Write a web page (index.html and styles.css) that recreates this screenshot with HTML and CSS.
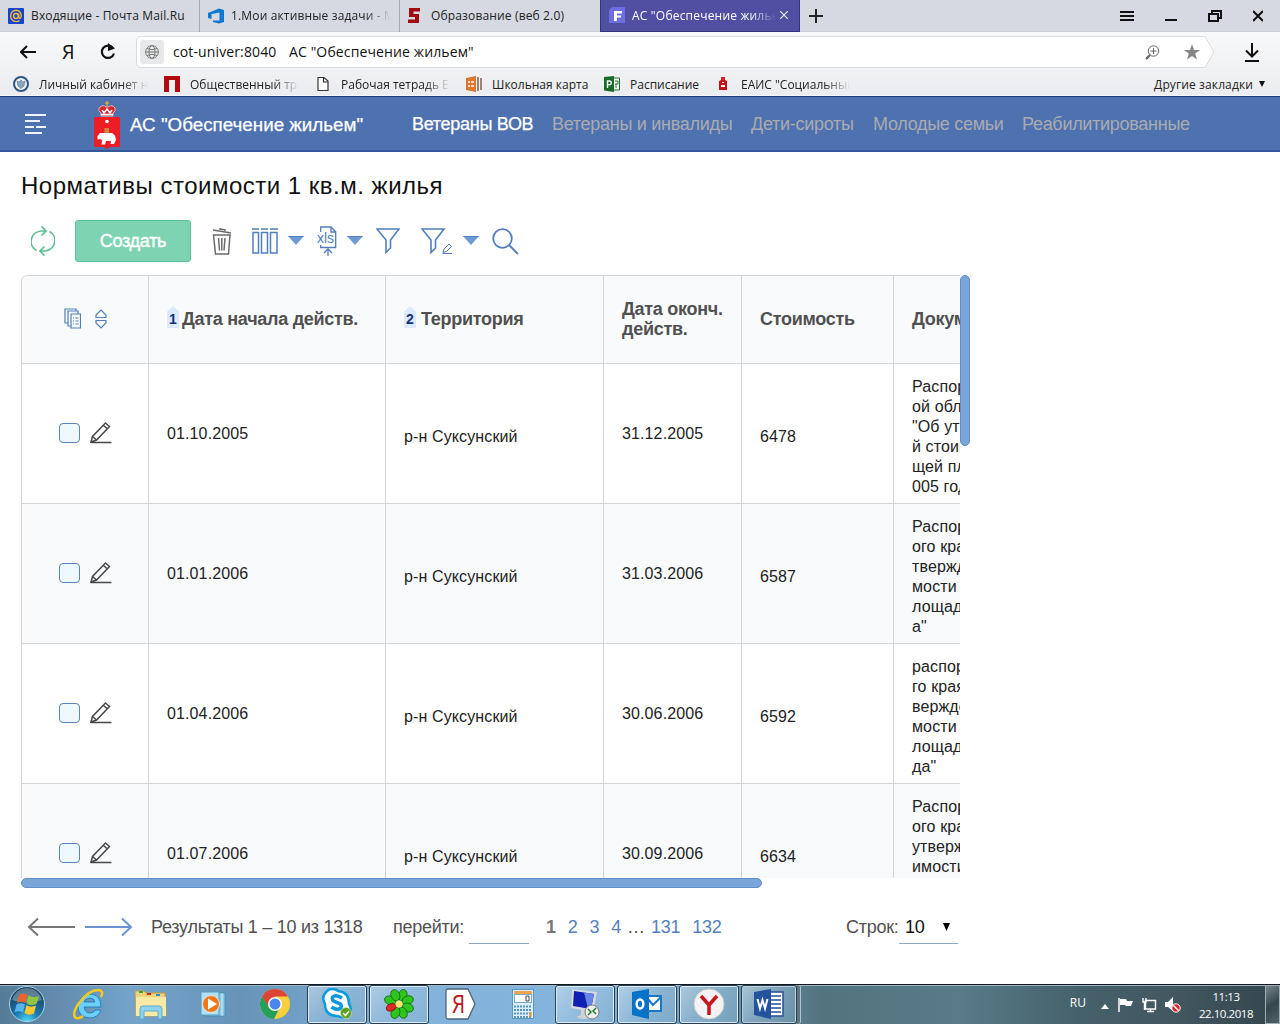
FILE: index.html
```html
<!DOCTYPE html>
<html lang="ru">
<head>
<meta charset="utf-8">
<title>АС "Обеспечение жильем"</title>
<link rel="stylesheet" href="styles.css">
</head>
<body>
<svg class="defs" width="0" height="0">
  <symbol id="pencil" viewBox="0 0 24 24"><path d="M2 21.500H22.500M2 21L3.500 15.500 16.500 2 20.500 5.500 7.500 19ZM3.500 15.500 7.500 19M14.500 4.500 18.500 8" fill="none" stroke="#484848" stroke-width="1.500"/></symbol>
  <symbol id="caret" viewBox="0 0 16 10"><path d="M0 0H16L8 9Z" fill="#6b9bd4"/><path d="M.5 .5H15.500" stroke="#4f80bb"/></symbol>
</svg>

<div class="tabs">
  <div class="tab"><svg width="16" height="16"><rect width="16" height="16" rx="1" fill="#1244d0"/><path d="M10.800 5.500V9.300Q11 11 12.600 10 13.600 8.600 13 6 11.500 2.300 8 2.300 3 2.500 2.600 8 3 13.300 8 13.600 10 13.600 11.500 12.600" fill="none" stroke="#f5b733" stroke-width="1.400"/><circle cx="8" cy="8" r="2.400" fill="none" stroke="#f5b733" stroke-width="1.500"/></svg><span class="t1">Входящие - Почта Mail.Ru</span></div>
  <div class="tab"><svg width="16" height="16"><path d="M5 3 11 .5 16 2V14L11 15.500 5 14V12.500L11.500 12.500V4.500L3.500 6V11L0 10V5Z" fill="#0d78d0"/></svg><span class="t2 fade">1.Мои активные задачи - М</span></div>
  <div class="tab last"><svg width="16" height="16"><path d="M1 0H12V3.500H5.500V6H11V15H0V11.500H7V9H1Z" fill="#a00c10"/></svg><span class="t3">Образование (веб 2.0)</span></div>
  <div class="tab active"><svg width="16" height="16"><path d="M3 0H16V16H0V3Z" fill="#6d6ee0"/><path d="M5 4H13V6.500H8V8.500H12V10.500H8V14H5Z" fill="#fff"/></svg><span class="t4 fade">АС "Обеспечение жильем"</span><svg class="close" width="8" height="8"><path d="M0 0 8 8M8 0 0 8" stroke="#e8e8ff" stroke-width="1.200"/></svg></div>
  <svg class="plus" width="14" height="14"><path d="M7 0V14M0 7H14" stroke="#222" stroke-width="2"/></svg>
  <div class="window-buttons">
    <svg width="14" height="14"><path d="M0 3H14M0 7H14M0 11H14" stroke="#111" stroke-width="2"/></svg>
    <svg width="12" height="14"><path d="M0 11H12" stroke="#111" stroke-width="2"/></svg>
    <svg width="14" height="14"><path d="M4 4V2H13V9H10M1 5H10V12H1Z" fill="none" stroke="#111" stroke-width="2"/></svg>
    <svg width="10" height="14"><path d="M0 2 10 12M10 2 0 12" stroke="#111" stroke-width="2"/></svg>
  </div>
</div>

<div class="browser-bar">
  <div class="address-row">
    <svg width="16" height="14"><path d="M16 7H1M7 1 1 7 7 13" fill="none" stroke="#111" stroke-width="2"/></svg>
    <span class="ya">Я</span>
    <svg width="16" height="18"><path d="M13 5A6.200 6.200 0 1 0 14 10.500" fill="none" stroke="#111" stroke-width="2.200"/><path d="M8 0 15 5.500 8 8Z" fill="#111"/></svg>
    <div class="address">
      <svg class="outline" width="1079" height="33"><path d="M5.500 .5H1069L1078 16 1069 31.500H5.500Q.5 31.500 .5 26.500V5.500Q.5 .5 5.500 .5Z" fill="#fff" stroke="#dcdddf"/></svg>
      <div class="site"><svg width="14" height="14" fill="none" stroke="#777"><circle cx="7" cy="7" r="6.400"/><ellipse cx="7" cy="7" rx="3" ry="6.400"/><path d="M.6 7H13.400M2 3.500Q7 6 12 3.500M2 10.500Q7 8 12 10.500"/></svg></div>
      <span class="url">cot-univer:8040</span><span class="page-name">АС "Обеспечение жильем"</span>
      <svg class="magnify" width="15" height="15" fill="none" stroke="#666"><circle cx="8.500" cy="6" r="5.200"/><path d="M8.500 3V9M5.500 6H11.500"/><path d="M5 10 1 14" stroke-width="2.400"/></svg>
      <svg class="star" width="16" height="16"><path d="M8 0 10 6H16L11.200 9.500 13 15.500 8 12 3 15.500 4.800 9.500 0 6H6Z" fill="#858585"/></svg>
    </div>
    <svg class="download" width="14" height="19"><path d="M7 0V13M1 7.500 7 13.500 13 7.500M0 18H14" fill="none" stroke="#111" stroke-width="2"/></svg>
  </div>
  <div class="bookmarks">
    <div class="bm"><svg width="16" height="16"><circle cx="8" cy="8" r="7" fill="#f2f2f2" stroke="#2d5687" stroke-width="2"/><path d="M4 5 6 6 8 4 10 6 12 5 11 10 8 12.500 5 10Z" fill="#8ba3ba" stroke="#5d7896" stroke-width=".6"/></svg><span class="fade">Личный кабинет на</span></div>
    <div class="bm"><svg width="16" height="16"><path d="M0 0H16V16H11V4H5V16H0Z" fill="#b10a10"/></svg><span class="fade">Общественный тран</span></div>
    <div class="bm"><svg width="16" height="16"><path d="M3 1.500H9L13 5V14.500H3ZM8.500 2V6H13" fill="#fff" stroke="#333" stroke-width="1.200"/></svg><span class="fade">Рабочая тетрадь ЕГ</span></div>
    <div class="bm"><svg width="16" height="16"><path d="M0 2 10 0V16L0 14Z" fill="#dd762f"/><path d="M2 6H4M5 6H8M2 10H4M5 10H8" stroke="#fff" stroke-width="1.500"/><path d="M12 1V15M15 2V14" stroke="#806050" stroke-width="1.500"/></svg><span class="w4">Школьная карта</span></div>
    <div class="bm"><svg width="16" height="16"><path d="M9 2H15.500V14H9" fill="#fff" stroke="#217332"/><path d="M11 5H14V8H11M12 8V12" fill="none" stroke="#217332"/><path d="M0 1 10 0V16L0 14.500Z" fill="#176c29"/><path d="M3.500 12V5H5.500Q8 5.200 7 8 6 9 3.500 8.700" fill="none" stroke="#fff" stroke-width="1.400"/></svg><span class="w5">Расписание</span></div>
    <div class="bm"><svg width="16" height="16"><path d="M4 5Q8 2.500 12 5V14H4Z" fill="#c41317"/><path d="M6 1H10V4H6Z" fill="#d22"/><path d="M6 9H10V11H6ZM7 6H9V7H7Z" fill="#fff"/></svg><span class="fade">ЕАИС "Социальный</span></div>
    <div class="other"><span>Другие закладки</span><svg width="6" height="6"><path d="M0 0H6L3 6Z" fill="#111"/></svg></div>
  </div>
</div>

<header class="app-header">
  <svg class="burger" width="22" height="20"><path d="M0 1H21M0 7H15M0 13H9M11 13H21M0 19H17" stroke="#eef3ff" stroke-width="2"/></svg>
  <svg class="arms" width="26" height="49"><path d="M0 16H26V46H16L13 48 10 46H0Z" fill="#ee1c25"/><path d="M5 7Q9 3 12 6H14Q18 3 21 7 22 10 19 12V15H7V12Q4 10 5 7Z" fill="#df2229" stroke="#f1dcc8" stroke-width=".8"/><path d="M7 13.500H19M8 9 10 12 13 8 16 12 18 9" fill="none" stroke="#fff" stroke-width="1.500"/><path d="M13 0V5M11 2H15" stroke="#d6a53b" stroke-width="1.500"/><circle cx="13" cy="20.500" r="1.800" fill="#fff"/><path d="M10.500 27H15V33H10.500Z" fill="#c9893b"/><path d="M3.500 35 6 32H18L21 34.500 22 39 20 43H16.500L17 40H12L11 43.500H7.500L8 39 6 38 3.500 38.500Z" fill="#fff"/></svg>
  <span class="brand">АС "Обеспечение жильем"</span>
  <nav><a class="on">Ветераны ВОВ</a><a class="n2">Ветераны и инвалиды</a><a class="n3">Дети-сироты</a><a class="n4">Молодые семьи</a><a class="n5">Реабилитированные</a></nav>
</header>

<main>
  <h1>Нормативы стоимости 1 кв.м. жилья</h1>
  <div class="toolbar">
    <svg class="refresh" width="24" height="30" fill="none" stroke="#5dbe94" stroke-width="1.700"><path d="M5.500 24.500A11 10.500 0 0 1 10 5H15M10.500 .5 15 5 10.500 9.500M18.500 5.500A11 10.500 0 0 1 14 25H9M13.500 20.500 9 25 13.500 29.500"/></svg>
    <button>Создать</button>
    <svg class="trash" width="20" height="27" fill="none" stroke="#6f6a6a" stroke-width="1.500"><path d="M1 2 19 5M8 2V1L13 1.800V3M1.500 7H18L16.500 26H3.500ZM6.500 10 7.500 22.500M9.800 10V22.500M13 10 12 22.500"/></svg>
    <svg class="columns" width="26" height="26" fill="none" stroke="#517fbd" stroke-width="1.500"><path d="M0 1H7M9 1H16M18 1H26M1 4.500H6.500V25H1ZM9.500 4.500H15.500V25H9.500ZM18.500 4.500H25V25H18.500Z"/></svg>
    <svg class="c1" width="16" height="10"><use href="#caret"/></svg>
    <svg class="xls" width="20" height="31" fill="none" stroke="#517fbd" stroke-width="1.300"><path d="M3.700 6V1H14L18.700 5.700V21.500H3.700V19M14 1V6H18.700M11 30V23M7 27 11 23 15 27"/><text x="0" y="16.500">xls</text></svg>
    <svg class="c2" width="16" height="10"><use href="#caret"/></svg>
    <svg class="filter" width="24" height="26" fill="none" stroke="#517fbd" stroke-width="1.600"><path d="M1 1H23L14.500 12V20L10 24.500V12Z"/></svg>
    <svg class="filter-edit" width="32" height="27" fill="none" stroke="#517fbd" stroke-width="1.600"><path d="M1 1H23L14.500 12V20L10 24.500V12Z"/><path stroke-width="1" d="M21.500 25.500H31M22 24.500 23 21 28 16 30.500 18.500 25.500 23.500Z"/></svg>
    <svg class="c3" width="16" height="10"><use href="#caret"/></svg>
    <svg class="search" width="27" height="27" fill="none" stroke="#517fbd" stroke-width="1.800"><circle cx="10.500" cy="10.500" r="9.300"/><path d="M17 17 26 26"/></svg>
  </div>

  <div class="grid-area">
    <div class="grid">
      <div class="row head">
        <div class="tools"><svg width="17" height="21" fill="none" stroke="#5180b9" stroke-width="1.200"><path d="M12 3V1H1V15H4M14 6V3H4V18H7M7 6H16.500V20H7ZM9 10H10M9 13H10M9 16H10M11.500 10H14.500M11.500 13H14.500M11.500 16H14.500"/></svg><svg width="12" height="20" fill="none" stroke="#5180b9" stroke-width="1.200"><path d="M1 8.500V6L6 1 11 6V8.500ZM1 11.500V14L6 19 11 14V11.500Z"/></svg></div>
        <div><i class="order">1</i><span>Дата начала действ.</span></div>
        <div><i class="order second">2</i><span>Территория</span></div>
        <div><span>Дата оконч.<br>действ.</span></div>
        <div>Стоимость</div>
        <div>Документ</div>
      </div>
      <div class="row"><div class="tools"><span class="check"></span><svg width="24" height="24"><use href="#pencil"/></svg></div><div>01.10.2005</div><div class="low">р-н Суксунский</div><div>31.12.2005</div><div class="low">6478</div><div class="low">Распоряжение<br>ой области от<br>"Об утвержден<br>й стоимости об<br>щей площади<br>005 год"</div></div>
      <div class="row alt"><div class="tools"><span class="check"></span><svg width="24" height="24"><use href="#pencil"/></svg></div><div>01.01.2006</div><div class="low">р-н Суксунский</div><div>31.03.2006</div><div class="low">6587</div><div class="low">Распоряжение<br>ого края "Об у<br>тверждении<br>мости общей п<br>лощади жиль<br>а"</div></div>
      <div class="row"><div class="tools"><span class="check"></span><svg width="24" height="24"><use href="#pencil"/></svg></div><div>01.04.2006</div><div class="low">р-н Суксунский</div><div>30.06.2006</div><div class="low">6592</div><div class="low">распоряжение<br>го края "Об ут<br>верждении сто<br>мости общей п<br>лощади жиль<br>да"</div></div>
      <div class="row alt"><div class="tools"><span class="check"></span><svg width="24" height="24"><use href="#pencil"/></svg></div><div>01.07.2006</div><div class="low">р-н Суксунский</div><div>30.09.2006</div><div class="low">6634</div><div class="low">Распоряжение<br>ого края "Об<br>утверждении<br>имости общей<br>площади<br>да"</div></div>
    </div>
    <div class="vbar"></div>
    <div class="hbar"></div>
  </div>

  <div class="pager">
    <svg width="48" height="20" fill="none" stroke="#777" stroke-width="2"><path d="M48 10H2M11 1.500 2 10 11 18.500"/></svg>
    <svg class="next" width="48" height="20" fill="none" stroke="#6a94cf" stroke-width="2"><path d="M0 10H46M37 1.500 46 10 37 18.500"/></svg>
    <span class="results">Результаты 1 – 10 из 1318</span>
    <span class="goto">перейти:</span><span class="field"></span>
    <span class="pages"><b>1</b><a>2</a><a>3</a><a>4</a><span>…</span><a class="p131">131</a><a>132</a></span>
    <span class="count">Строк:</span><span class="select">10<svg width="7" height="8"><path d="M0 0H7L3.500 8Z" fill="#000"/></svg></span>
  </div>
</main>

<footer class="taskbar">
  <svg class="start" width="38" height="38"><defs><radialGradient id="orb" cx=".5" cy="1" r=".9"><stop offset="0" stop-color="#4fe0ff"/><stop offset=".4" stop-color="#1b78b0"/><stop offset="1" stop-color="#17405f"/></radialGradient></defs><circle cx="19" cy="19" r="17.500" fill="url(#orb)" stroke="#b5d3e4"/><path d="M4 15Q8 3 19 3T34 15Q20 20 4 15Z" fill="#fff" opacity=".3"/><path d="M11 10Q15 7 19.500 10L17.500 18Q13.500 15.500 9 18Z" fill="#f0622c"/><path d="M20.500 10.500Q25.500 13.500 31 11L28.500 19Q23 21.500 18.500 18.500Z" fill="#90c63e"/><path d="M8.500 19.500Q13 17 17 19.500L15 27.500Q11 25 6.500 27.500Z" fill="#57b4ef"/><path d="M18.500 20Q22.500 23 28 20.500L26 28.500Q21 31 16.500 28Z" fill="#fbc72f"/></svg>
  <div class="slot"><svg width="32" height="32"><path d="M28 19H11Q12 25 17 25 21 25 22 22H28Q25 30 16.500 30 5 29 5 18 6 7 16.500 6 28 6 28 19ZM22 14Q21 10 16.500 10 12 10.500 11 14Z" fill="#6dcff8" stroke="#1575ba" stroke-width=".8"/><path d="M28 9Q31 3 26 2 15 2 6 15-2 27 3 30 6 31 10 28" fill="none" stroke="#f7c81e" stroke-width="2.500"/></svg></div>
  <div class="slot"><svg width="32" height="32"><path d="M0 3H9L11 5H30L31 28H1Z" fill="#efd27a" stroke="#c6a043"/><path d="M1 9H31V28H1Z" fill="#fbe9a6"/><path d="M4 4H8" stroke="#32a736" stroke-width="2"/><path d="M12 6H16" stroke="#c82820" stroke-width="2"/><path d="M21 7H25" stroke="#3190d0" stroke-width="2"/><path d="M5 31V21Q5 18 8 18H24Q27 18 27 21V31H23V23H9V31Z" fill="#8fd3ee" stroke="#5caad1"/></svg></div>
  <div class="slot"><svg width="28" height="28"><path d="M6 3H26V26H6Z" fill="#8bc8e5" stroke="#4790b6"/><path d="M23 3V26" stroke="#d5eef8"/><path d="M2 2H20V25H2Z" fill="#b3e0f2" stroke="#559fc3"/><circle cx="12" cy="14" r="8.500" fill="#f17819" stroke="#e7e7e7"/><path d="M9 8.500 18 14 9 19.500Z" fill="#fff"/></svg></div>
  <div class="slot"><svg width="30" height="30"><circle cx="15" cy="15" r="15" fill="#f9cf3c"/><path d="M2 7.500A15 15 0 0 0 14 30L20 18 15 15 10 18Z" fill="#25a05a"/><path d="M28 7.500H15V15L9 18 2 7.500A15 15 0 0 1 28 7.500" fill="#dc4437"/><circle cx="15" cy="15" r="7" fill="#fff"/><circle cx="15" cy="15" r="5.500" fill="#4a86ee"/></svg></div>
  <div class="slot open"><svg width="32" height="32"><path d="M8 1.500Q14 0 17 3 28 4 28 16 32 22 27 27 22 31 17 28 4 28 4 16-1 8 8 1.500Z" fill="#fff" stroke="#079ddd" stroke-width="2.500"/><path d="M21 10Q15 6 11.500 9 10 13 16 14.500 22 16.500 20 20 16 23 10.500 19" fill="none" stroke="#0598da" stroke-width="3.500"/><circle cx="25" cy="25" r="5.500" fill="#5ba016" stroke="#d5e4c2" stroke-width=".6"/><path d="M22 25 24.500 27.500 28 23" fill="none" stroke="#fff" stroke-width="1.500"/></svg></div>
  <div class="slot open"><svg width="32" height="32" viewBox="-16 -16 32 32"><g fill="#2dc51e" stroke="#126b11" stroke-width=".8"><ellipse id="leaf" cy="-9.500" rx="4.300" ry="5.800" transform="rotate(22)"/><use href="#leaf" transform="rotate(45)"/><use href="#leaf" transform="rotate(90)"/><use href="#leaf" transform="rotate(135)"/><use href="#leaf" transform="rotate(180)"/><use href="#leaf" transform="rotate(270)"/><use href="#leaf" transform="rotate(315)"/></g><ellipse cy="-8.500" rx="3.500" ry="5" transform="rotate(247)" fill="#e82720" stroke="#871916"/><circle r="3.500" fill="#ffe56b"/></svg></div>
  <div class="slot"><svg width="32" height="32"><path d="M3 1H23L30 16 23 31H3Q1 31 1 29V3Q1 1 3 1Z" fill="#fff" stroke="#4c6477" stroke-width="1.300"/><text transform="translate(7 25) scale(.8 1)" class="red-ya">Я</text></svg></div>
  <div class="slot"><svg width="22" height="30"><rect x=".5" y=".5" width="21" height="29" fill="#dceefa" stroke="#5a98c4"/><rect x="2" y="2" width="18" height="3" fill="#efa34c"/><rect x="2.500" y="5.500" width="17" height="8" fill="#fff" stroke="#7baac8"/><path d="M14 7H17V12H14Z" fill="none" stroke="#444"/><path d="M2 17.500H20M2 21H20M2 24.500H20M2 28H20" stroke="#5795bf" stroke-width="2" stroke-dasharray="2 1"/><path d="M18.500 23V28" stroke="#f08c26" stroke-width="2"/></svg></div>
  <div class="slot open"><svg width="32" height="32"><path d="M3 1 28 4 24 24 2 20Z" fill="#d7d9dd"/><path d="M5 3 25 6 22 21 4 18Z" fill="#1020b2"/><path d="M15 4.500 25 6 22 21 19 20.500Z" fill="#6785e5"/><path d="M12 22H17V26L23 29Q15 33 7 29L12 27Z" fill="#cfd3d5"/><circle cx="23" cy="24" r="7" fill="#eee" stroke="#777"/><path d="M19 21 22 24 19 27M27 20 24 23 27 26" fill="none" stroke="#237a2f" stroke-width="1.500"/></svg></div>
  <div class="slot open"><svg width="32" height="32"><path d="M16 8H30V23H16Z" fill="#fff" stroke="#1878c7" stroke-width="2"/><path d="M17 11 22 17 30 9" fill="none" stroke="#1878c7" stroke-width="2"/><path d="M1 4 18 1V31L1 27Z" fill="#0872c6"/><ellipse cx="9" cy="16" rx="3.300" ry="4.500" fill="none" stroke="#fff" stroke-width="2.500"/></svg></div>
  <div class="slot open"><svg width="32" height="32"><circle cx="16" cy="16" r="15" fill="#f3f3f3" stroke="#ccc"/><path d="M8 8 16 17 24 8M16 16V27" fill="none" stroke="#c9161c" stroke-width="3.500"/></svg></div>
  <div class="slot open word"><svg width="32" height="32"><path d="M16 4H30V28H16Z" fill="#fff" stroke="#244f95" stroke-width="1.500"/><path d="M18 8H28M18 12H28M18 16H28M18 20H28M18 24H28" stroke="#244f95" stroke-width="1.500"/><path d="M1 4 18 1V31L1 27Z" fill="#24539e"/><path d="M4.500 11 7 20.500 9.500 12 12 20.500 14.500 11" fill="none" stroke="#fff" stroke-width="2"/></svg></div>
  <div class="tray"><span class="lang">RU</span>
    <svg class="up" width="8" height="5"><path d="M0 5 4 0 8 5Z" fill="#fff"/></svg>
    <svg width="16" height="16"><path d="M2 1V15" stroke="#fff" stroke-width="1.500"/><path d="M3 2H9L10 4H16L14 9H9L8 8H3Z" fill="#fff"/></svg>
    <svg width="16" height="16"><path d="M4.500 3.500H14.500V12H4.500ZM6 14.500H13M9.500 12V14M2 1V5H5V1M3.500 5V13" fill="none" stroke="#fff" stroke-width="1.400"/></svg>
    <svg width="16" height="16"><path d="M0 5H3L8 0V14L3 10H0Z" fill="#fff"/><circle cx="11" cy="11" r="4.200" fill="#dc2327" stroke="#fff"/><path d="M8.500 8.500 13.500 13.500" stroke="#fff" stroke-width="1.500"/></svg>
    <span class="clock">11:13<br>22.10.2018</span>
  </div>
  <div class="peek"></div>
</footer>
</body>
</html>
```

FILE: styles.css
```css
* { box-sizing: border-box; }
html, body { margin: 0; height: 1024px; overflow: hidden; }
body { width: 1280px; display: flex; flex-direction: column; background: #fff; font-family: "Liberation Sans", Arial, sans-serif; color: #222; }
svg { display: block; flex: none; }
.defs { position: absolute; }
span, a, b { white-space: nowrap; }

.tabs, .browser-bar { font-family: "Open Sans", "Noto Sans", sans-serif; font-size: 12px; }
.tabs { height: 32px; flex: none; display: flex; align-items: center; background: #d6d9e1; border-bottom: 1px solid #cdd0d9; letter-spacing: .15px; }
.tab { width: 200px; height: 32px; display: flex; align-items: center; padding-left: 8px; gap: 7px; border-right: 1px solid #a6a8b0; }
.tab.last { border-right: 0; }
.tab.active { background: #514fa2; border: 1px solid #34327f; border-top: 0; color: #fff; }
.tab.active .fade { width: 144px; letter-spacing: .2px; }
.tab .fade { width: 160px; }
.tab .close { margin-left: -3px; }
.fade { overflow: hidden; mask-image: linear-gradient(to right, #000 calc(100% - 26px), transparent); }
.plus { margin-left: 9px; }
.window-buttons { margin: 0 17px 0 auto; display: flex; gap: 31px; }

.browser-bar { height: 64px; flex: none; background: linear-gradient(#f8f9fa, #ebecef); border-bottom: 1px solid #f7f7f8; }
.address-row { height: 40px; display: flex; align-items: center; padding: 0 21px 0 20px; }
.ya { width: 13px; margin: 0 25px 0 26px; font-size: 20px; line-height: 24px; color: #111; }
.address { position: relative; flex: none; width: 1079px; height: 32px; margin-left: 20px; display: flex; align-items: center; font-size: 14px; color: #111; }
.outline { position: absolute; left: 0; top: 0; }
.address > :not(.outline) { position: relative; }
.site { width: 24px; height: 24px; margin-left: 4px; border-radius: 3px; background: #e7e8e9; display: grid; place-items: center; }
.url { width: 116px; margin-left: 9px; letter-spacing: .12px; }
.page-name { letter-spacing: .12px; }
.url, .page-name { margin-top: -2px; }
.magnify { margin-left: auto; }
.star { margin: 0 15px 0 24px; }
.download { margin-left: auto; }
.bookmarks { height: 24px; display: flex; align-items: center; padding: 0 15px 0 13px; }
.bm { display: flex; align-items: center; gap: 10px; margin-right: 16px; }
.bm .fade { width: 109px; }
.w4 { width: 96px; }
.w5 { width: 69px; }
.other { margin-left: auto; display: flex; align-items: center; gap: 6px; letter-spacing: .12px; }

.app-header { height: 56px; flex: none; display: flex; align-items: center; padding-left: 25px; background: #4e71b0; border-top: 1px solid #18397c; border-bottom: 2px solid #34579b; color: #fff; font-size: 18px; }
.burger { margin-right: 47px; }
.arms { margin-top: 3px; }
.brand { width: 292px; flex: none; padding-left: 10px; font-size: 18.8px; }
nav { display: flex; letter-spacing: -.29px; }
nav a { color: #a9abaf; flex: none; }
nav .on { color: #fff; width: 140px; }
.brand, nav .on { -webkit-text-stroke: .25px #fff; }
.brand, nav { padding-top: 2px; }
.n2 { width: 199px; } .n3 { width: 122px; } .n4 { width: 149px; }

main { flex: 1; padding: 18px 0 0 21px; display: flex; flex-direction: column; }
h1 { margin: 0; font-size: 24px; font-weight: 400; line-height: 32px; height: 50px; color: #111; letter-spacing: .5px; }
.toolbar { height: 42px; display: flex; align-items: center; margin-bottom: 13px; }
.refresh { margin-left: 10px; }
button { width: 116px; height: 42px; margin: 0 21px 0 20px; padding: 0; border: 1px solid #5fc19a; border-radius: 3px; background: #7dd3b2; color: #fff; font: 18px "Liberation Sans", Arial, sans-serif; letter-spacing: -.3px; -webkit-text-stroke: .4px #fff; }
.columns { margin-left: 20px; }
.c1 { margin-left: 10px; }
.xls { margin-left: 13px; }
.xls text { font-size: 14px; fill: #517fbd; stroke: none; }
.c2 { margin-left: 10px; }
.filter { margin-left: 13px; }
.filter-edit { margin-left: 21px; }
.c3 { margin-left: 10px; }
.search { margin-left: 13px; }

.grid-area { display: grid; grid-template: 603px 10px / 939px 10px; flex: none; width: 949px; }
.grid { overflow: hidden; border-top-left-radius: 6px; border-left: 1px solid #d3d4d6; font-size: 16px; line-height: 20px; letter-spacing: .12px; }
.row { height: 140px; width: 1100px; display: grid; grid-template-columns: 126px 237px 218px 138px 152px 1fr; border-top: 1px solid #d3d4d6; }
.row > div { display: flex; align-items: center; padding-left: 18px; border-left: 1px solid #d3d4d6; }
.row > .tools { border-left: 0; padding: 0 0 2px 37px; gap: 9px; }
.row > .low { padding-top: 6px; }
.head { height: 88px; font-size: 18px; font-weight: 700; letter-spacing: -.28px; color: #505050; background: #f8fafc; border-top-left-radius: 6px; }
.row.head > div { padding-bottom: 2px; }
.head > .tools { padding-left: 42px; gap: 14px; }
.alt { background: #f8fafc; }
.check { width: 21px; height: 20px; border: 1px solid #5687b9; border-radius: 4px; background: #eff7ff; }
.order { width: 12px; height: 22px; margin: -3px 3px 0 0; padding: 4px 0 0 2px; background: #dceaff; clip-path: polygon(50% 0, 100% 25%, 100% 100%, 0 100%, 0 25%); font: 700 14px/18px "Liberation Sans", sans-serif; letter-spacing: 0; color: #143274; }
.order.second { margin-right: 5px; }
.vbar { height: 171px; background: #79a5d9; border: 1px solid #5f8fc9; border-radius: 5px; }
.hbar { width: 741px; height: 10px; background: #79a5d9; border: 1px solid #5f8fc9; border-radius: 5px; }

.pager { margin-top: 21px; height: 36px; display: flex; align-items: center; padding-left: 6px; font-size: 18px; letter-spacing: -.27px; color: #505050; }
.next { margin-left: 10px; }
.results { width: 242px; margin-left: 18px; }
.goto { width: 76px; }
.field { width: 60px; height: 35px; margin-top: -1px; border-bottom: 1px solid #8aa7c5; }
.pages { width: 317px; padding-left: 17px; display: flex; }
.pages a { color: #5380be; margin-left: 12px; }
.pages b { color: #777; }
.pages span { margin-left: 6px; width: 18px; }
.pages .p131 { margin-left: 6px; }
.count { width: 53px; }
.select { width: 59px; height: 35px; margin-top: -1px; padding: 2px 8px 0 6px; display: flex; align-items: center; justify-content: space-between; border-bottom: 1px solid #8aa7c5; color: #111; }

.taskbar { height: 40px; flex: none; display: flex; align-items: center; border-top: 1px solid #111820; box-shadow: inset 0 1px #9eb8ca; background: linear-gradient(90deg, #557c99 0, #648cad 60px, #74a4ca 130px, #6793b8 240px, #82b2d9 400px, #85b5dc 600px, #6995ac 740px, #52747f 820px, #587b87 960px, #45616c 1080px, #42565f 1180px, #33464e 1280px); }
.start { margin: -2px 8px 0 8px; }
.slot { width: 60px; height: 39px; margin-right: 2px; padding-bottom: 2px; display: grid; place-items: center; flex: none; }
.start + .slot { margin-left: 5px; }
.open { border: 1px solid #263e53; border-radius: 3px; box-shadow: inset 0 0 0 1px #deedf8; background: linear-gradient(135deg, #d1e2ee99, #a5c7e366 50%, #87afcc66); }
.word { width: 56px; box-shadow: inset 0 0 0 1px #bfd0d8, 3px 0 #5e777f, 4px 0 #b4c5ca; }
.tray { margin-left: auto; display: flex; align-items: center; color: #fff; font: 12px/17px "Open Sans", sans-serif; gap: 8px; }
.lang { margin: -4px 7px 0 0; }
.up { margin-top: 3px; }
.clock { width: 60px; margin-left: 7px; text-align: center; font-size: 11.5px; letter-spacing: -.45px; }
.peek { width: 15px; height: 39px; margin-left: 9px; border: 1px solid #a1aeb3; background: linear-gradient(145deg, #75868d, #35464d 50%, #516169); }
.red-ya { font: 26px "Open Sans", sans-serif; fill: #bd1118; }
```
